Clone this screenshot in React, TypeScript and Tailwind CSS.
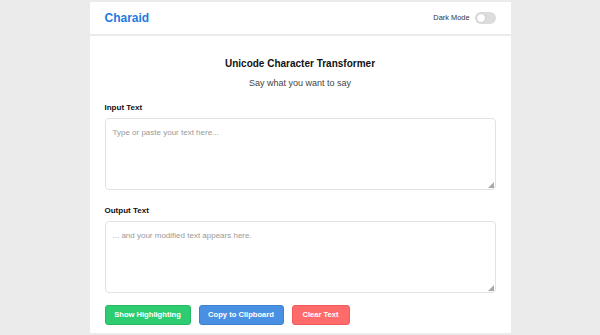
function Field({ label, placeholder, className }: { label: string; placeholder: string; className: string }) {
    return (
        <div className={className}>
            <label className="block text-[8px] leading-[12px] font-bold text-[#111]">{label}</label>
            <div className="relative mt-[4px]">
                <textarea
                    className="block h-[72px] w-full resize-none rounded-[4px] border border-[#e2e2e2] px-[7px] py-[8px] text-[8px] outline-none placeholder:text-[#9a9a9a]"
                    placeholder={placeholder}
                />
                {/* resize grip */}
                <svg className="absolute right-[2px] bottom-[2px]" width="6" height="6" viewBox="0 0 6 6">
                    <path d="M6 0 L6 6 L0 6 Z" fill="#a8a8a8" />
                </svg>
            </div>
        </div>
    );
}

export default function App() {
    return (
        <div className="min-h-[335px] w-full bg-[#ebebeb] pt-[2px]" style={{ fontFamily: '"Liberation Sans", Arial, sans-serif' }}>
            <div className="mx-auto w-[421px]">
                <header className="flex h-[32px] items-center justify-between bg-white px-[15px]">
                    <span className="text-[12px] font-bold text-[#1f7ae0]">Charaid</span>
                    <div className="flex items-center gap-[5px]">
                        <span className="text-[7.4px] text-[#333]">Dark Mode</span>
                        <div className="flex h-[12px] w-[21px] items-center rounded-full bg-[#dcdcdc] px-[1px]">
                            <div className="h-[10px] w-[10px] rounded-full border border-[#cfcfcf] bg-white" />
                        </div>
                    </div>
                </header>
                <main className="mt-[2px] bg-white px-[15px] pt-[20px] pb-[8px]">
                    <h1 className="text-center text-[10px] leading-[16px] font-bold text-[#111]">Unicode Character Transformer</h1>
                    <p className="mt-[4px] text-center text-[9px] leading-[14px] text-[#444]">Say what you want to say</p>
                    <Field className="mt-[12px]" label="Input Text" placeholder="Type or paste your text here..." />
                    <Field className="mt-[15px]" label="Output Text" placeholder="... and your modified text appears here." />
                    <div className="mt-[12px] flex gap-[8px]">
                        <button className="h-[20px] w-[86px] rounded-[3px] border border-[#27b863] bg-[#2ecc71] text-[7.6px] font-bold text-white">Show Highlighting</button>
                        <button className="h-[20px] w-[85px] rounded-[3px] border border-[#3d80d0] bg-[#4a90e2] text-[7.6px] font-bold text-white">Copy to Clipboard</button>
                        <button className="h-[20px] w-[58px] rounded-[3px] border border-[#f05a5a] bg-[#ff6b6b] text-[7.6px] font-bold text-white">Clear Text</button>
                    </div>
                </main>
            </div>
        </div>
    );
}
